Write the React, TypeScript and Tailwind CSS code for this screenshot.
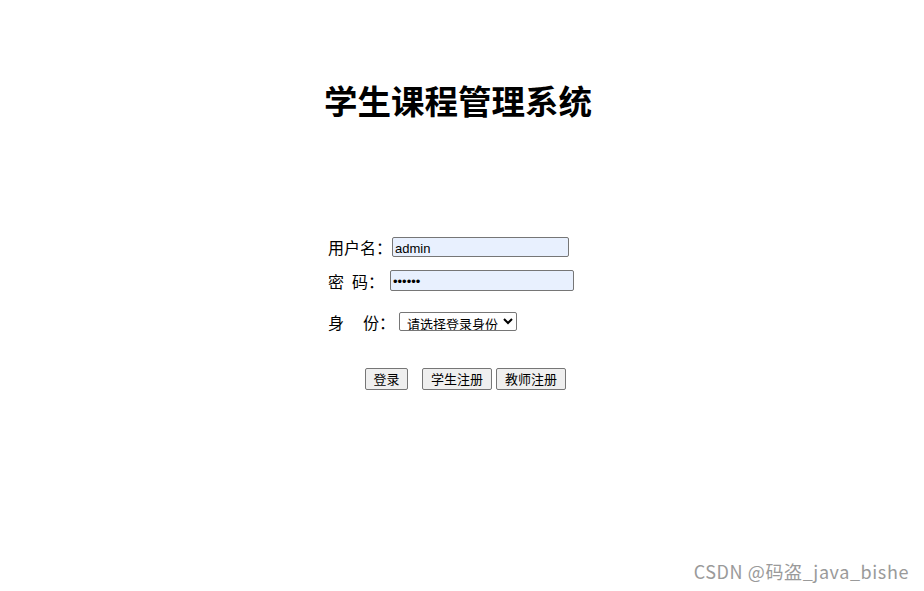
import { useState } from "react"

const cjk = "font-['Microsoft_YaHei','Noto_Sans_CJK_SC',sans-serif]"

export default function App() {
  const [username, setUsername] = useState("admin")
  const [password, setPassword] = useState("123456")
  const [role, setRole] = useState("")

  return (
    <div className={`relative h-[591px] w-full bg-white text-black ${cjk}`}>
      <h1 className="pr-[8px] pt-[77px] text-center text-[33.5px] font-bold leading-[46px]">学生课程管理系统</h1>

      <form className="mx-auto mt-[114px] w-[268px] text-[16px] leading-[20px]" onSubmit={(e) => e.preventDefault()}>
        <div className="flex h-[20px] items-center">
          <label className="w-[64px]">用户名：</label>
          <input
            value={username}
            onChange={(e) => setUsername(e.target.value)}
            className="h-[20px] w-[177px] rounded-[2px] border border-[#767676] bg-[#e8f0fe] px-[2px] pt-[2px] font-['Liberation_Sans',sans-serif] text-[13px] leading-[16px] outline-none"
          />
        </div>

        <div className="mt-[13px] flex h-[21px] items-center">
          <label className="flex w-[62px] items-center">
            <span>密</span>
            <span className="ml-[8px]">码：</span>
          </label>
          <input
            type="password"
            value={password}
            onChange={(e) => setPassword(e.target.value)}
            className="h-[21px] w-[184px] rounded-[2px] border border-[#767676] bg-[#e8f0fe] px-[2px] pt-[1px] font-['Liberation_Sans',sans-serif] text-[13px] leading-[16px] outline-none"
          />
        </div>

        <div className="mt-[21px] flex h-[19px] items-center">
          <label className="flex w-[71px] items-center">
            <span>身</span>
            <span className="ml-[19px]">份：</span>
          </label>
          <select
            value={role}
            onChange={(e) => setRole(e.target.value)}
            className="h-[19px] w-[118px] rounded-[2px] border border-[#767676] bg-white py-0 pl-[3px] text-[13px] leading-[17px] outline-none"
          >
            <option value="">请选择登录身份</option>
            <option value="student">学生</option>
            <option value="teacher">教师</option>
            <option value="admin">管理员</option>
          </select>
        </div>

        <div className="mt-[37px] flex items-center pl-[37px] text-[13px]">
          <button className="h-[22px] w-[43px] rounded-[2px] border border-[#767676] bg-[#efefef] leading-[20px]">登录</button>
          <button className="ml-[14px] h-[22px] w-[70px] rounded-[2px] border border-[#767676] bg-[#efefef] leading-[20px]">学生注册</button>
          <button className="ml-[4px] h-[22px] w-[70px] rounded-[2px] border border-[#767676] bg-[#efefef] leading-[20px]">教师注册</button>
        </div>
      </form>

      <div className="absolute bottom-[8px] right-[15px] text-[18px] leading-[24px] tracking-[0.6px] text-[#9a9a9a]">CSDN @码盗_java_bishe</div>
    </div>
  )
}
